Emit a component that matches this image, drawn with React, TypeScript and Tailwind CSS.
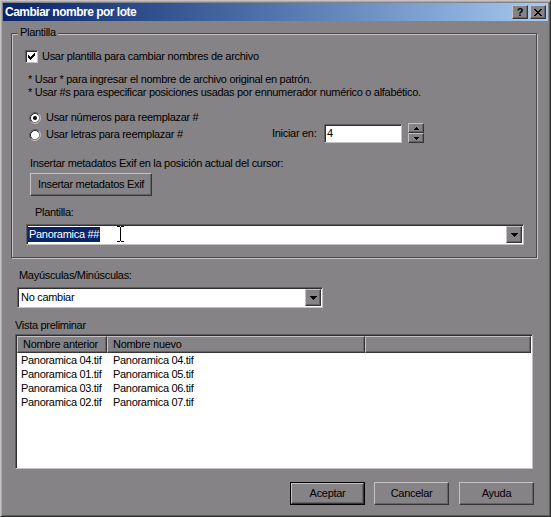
import React from "react";

// bordes clásicos tipo Windows 2000
const RAISED =
  "border border-t-[#c4c2c4] border-l-[#c4c2c4] border-r-[#363636] border-b-[#363636] shadow-[inset_-1px_-1px_0_#656365]";
const SUNKEN =
  "border border-t-[#5e5c5e] border-l-[#5e5c5e] border-r-[#c4c2c4] border-b-[#c4c2c4] shadow-[inset_1px_1px_0_#2f2f2f] p-[1px]";

function DownArrow() {
  return (
    <svg width="7" height="4" viewBox="0 0 7 4" shapeRendering="crispEdges">
      <path d="M0 0h7v1H0z M1 1h5v1H1z M2 2h3v1H2z M3 3h1v1H3z" fill="#000" />
    </svg>
  );
}

function SmallArrow({ up }: { up?: boolean }) {
  return (
    <svg width="5" height="3" viewBox="0 0 5 3" shapeRendering="crispEdges">
      {up ? (
        <path d="M2 0h1v1H2z M1 1h3v1H1z M0 2h5v1H0z" fill="#000" />
      ) : (
        <path d="M0 0h5v1H0z M1 1h3v1H1z M2 2h1v1H2z" fill="#000" />
      )}
    </svg>
  );
}

function Checkbox() {
  return (
    <div className={`${SUNKEN} w-[13px] h-[13px] bg-white flex items-center justify-center`}>
      <svg width="7" height="7" viewBox="0 0 7 7" shapeRendering="crispEdges">
        <path
          d="M6 0h1v1H6z M5 1h2v1H5z M0 2h1v1H0z M4 2h3v1H4z M0 3h2v1H0z M3 3h3v1H3z M0 4h5v1H0z M1 5h3v1H1z M2 6h1v1H2z"
          fill="#000"
        />
      </svg>
    </div>
  );
}

function Radio({ checked }: { checked?: boolean }) {
  return (
    <svg width="12" height="12" viewBox="0 0 12 12">
      <circle cx="6" cy="6" r="4.5" fill="#fff" />
      <path d="M2.11 9.89A5.5 5.5 0 0 1 9.89 2.11" stroke="#5e5c5e" fill="none" />
      <path d="M9.89 2.11A5.5 5.5 0 0 1 2.11 9.89" stroke="#c4c2c4" fill="none" />
      <path d="M2.82 9.18A4.5 4.5 0 0 1 9.18 2.82" stroke="#2f2f2f" fill="none" />
      <path d="M9.18 2.82A4.5 4.5 0 0 1 2.82 9.18" stroke="#858385" fill="none" />
      {checked && <circle cx="6" cy="6" r="2" fill="#000" />}
    </svg>
  );
}

function DropButton() {
  return (
    <div className={`${RAISED} w-[16px] h-full bg-[#858385] flex items-center justify-center shrink-0`}>
      <DownArrow />
    </div>
  );
}

function Button({ label, primary }: { label: string; primary?: boolean }) {
  if (primary) {
    return (
      <div className="w-[75px] h-[23px] border border-black">
        <div className={`${RAISED} h-full flex items-center justify-center`}>{label}</div>
      </div>
    );
  }
  return (
    <div className={`${RAISED} w-[75px] h-[23px] flex items-center justify-center`}>{label}</div>
  );
}

const rows = [
  ["Panoramica 04.tif", "Panoramica 04.tif"],
  ["Panoramica 01.tif", "Panoramica 05.tif"],
  ["Panoramica 03.tif", "Panoramica 06.tif"],
  ["Panoramica 02.tif", "Panoramica 07.tif"],
];

export default function App() {
  return (
    <div className="w-[551px] h-[517px] bg-[#858385] text-black font-['Liberation_Sans',Arial,sans-serif] text-[11px] leading-[13px] tracking-[-0.3px] border border-t-[#c4c2c4] border-l-[#c4c2c4] border-r-[#2e2e2e] border-b-[#2e2e2e] shadow-[inset_1px_1px_0_#a9a7a9,inset_-1px_-1px_0_#5e5c5e] p-[2px] flex flex-col">
      {/* barra de título */}
      <div className="h-[18px] shrink-0 flex items-center bg-linear-to-r from-[#0a246a] to-[#a6caf0] pl-[2px] pr-[2px]">
        <span className="text-white font-bold text-[12px] tracking-[-0.5px]">Cambiar nombre por lote</span>
        <div className="ml-auto flex gap-[2px]">
          <div className={`${RAISED} w-[16px] h-[14px] bg-[#858385] flex items-center justify-center font-bold text-[11px] tracking-normal`}>
            ?
          </div>
          <div className={`${RAISED} w-[16px] h-[14px] bg-[#858385] flex items-center justify-center`}>
            <svg width="8" height="7" viewBox="0 0 8 7" shapeRendering="crispEdges">
              <path
                d="M0 0h2v1H0z M6 0h2v1H6z M1 1h2v1H1z M5 1h2v1H5z M2 2h4v1H2z M3 3h2v1H3z M2 4h4v1H2z M1 5h2v1H1z M5 5h2v1H5z M0 6h2v1H0z M6 6h2v1H6z"
                fill="#000"
              />
            </svg>
          </div>
        </div>
      </div>

      {/* grupo Plantilla */}
      <div className="relative ml-[8px] mt-[12px] w-[526px] h-[225px] shrink-0 border border-[#484648] shadow-[inset_1px_1px_0_#c4c2c4,1px_1px_0_#c4c2c4] flex flex-col">
        <span className="absolute -top-[8px] left-[6px] px-[2px] bg-[#858385]">Plantilla</span>

        <div className="mt-[16px] ml-[13px] h-[13px] flex items-center gap-[4px]">
          <Checkbox />
          <span>Usar plantilla para cambiar nombres de archivo</span>
        </div>

        <div className="mt-[10px] ml-[16px]">
          <div>* Usar * para ingresar el nombre de archivo original en patrón.</div>
          <div>* Usar #s para especificar posiciones usadas por ennumerador numérico o alfabético.</div>
        </div>

        <div className="mt-[10px] flex items-end">
          <div className="ml-[17px] w-[243px] flex flex-col">
            <div className="h-[17px] flex items-center gap-[5px]">
              <Radio checked />
              <span>Usar números para reemplazar #</span>
            </div>
            <div className="h-[17px] flex items-center gap-[5px]">
              <Radio />
              <span>Usar letras para reemplazar #</span>
            </div>
          </div>
          <div className="w-[52px] h-[19px] flex items-center">Iniciar en:</div>
          <div className={`${SUNKEN} w-[78px] h-[19px] bg-white flex items-center pl-[2px]`}>4</div>
          <div className="ml-[6px] h-[20px] flex flex-col">
            <div className={`${RAISED} w-[16px] h-[10px] flex items-center justify-center`}>
              <SmallArrow up />
            </div>
            <div className={`${RAISED} w-[16px] h-[10px] flex items-center justify-center`}>
              <SmallArrow />
            </div>
          </div>
        </div>

        <div className="mt-[14px] ml-[18px]">Insertar metadatos Exif en la posición actual del cursor:</div>
        <div className={`${RAISED} mt-[3px] ml-[18px] w-[122px] h-[23px] flex items-center justify-center`}>
          Insertar metadatos Exif
        </div>

        <div className="mt-[10px] ml-[23px]">Plantilla:</div>
        <div className={`${SUNKEN} relative mt-[5px] ml-[14px] w-[498px] h-[21px] bg-white flex`}>
          <div className="flex-1 flex items-center">
            <span className="bg-[#0a246a] text-white leading-[15px] pl-[1px] pr-[1px]">Panoramica ##</span>
          </div>
          <svg className="absolute left-[90px] top-[1px]" width="7" height="16" viewBox="0 0 7 16" shapeRendering="crispEdges">
            <path d="M0 0h3v1H0z M4 0h3v1H4z M3 1h1v14H3z M0 15h3v1H0z M4 15h3v1H4z" fill="#000" />
          </svg>
          <DropButton />
        </div>
      </div>

      <div className="mt-[11px] ml-[16px]">Mayúsculas/Minúsculas:</div>
      <div className={`${SUNKEN} mt-[5px] ml-[14px] w-[306px] h-[21px] shrink-0 bg-white flex`}>
        <div className="flex-1 flex items-center pl-[2px]">No cambiar</div>
        <DropButton />
      </div>

      <div className="mt-[11px] ml-[12px]">Vista preliminar</div>
      <div className={`${SUNKEN} mt-[2px] ml-[12px] w-[518px] h-[135px] shrink-0 bg-white flex flex-col`}>
        <div className="h-[17px] flex shrink-0 bg-[#858385]">
          <div className={`${RAISED} w-[90px] flex items-center pl-[5px]`}>Nombre anterior</div>
          <div className={`${RAISED} w-[258px] flex items-center pl-[5px]`}>Nombre nuevo</div>
          <div className={`${RAISED} flex-1`} />
        </div>
        {rows.map((r, i) => (
          <div key={i} className="h-[14px] flex items-center">
            <div className="w-[90px] pl-[4px]">{r[0]}</div>
            <div className="pl-[6px]">{r[1]}</div>
          </div>
        ))}
      </div>

      <div className="mt-[13px] flex justify-end pr-[14px]">
        <Button label="Aceptar" primary />
        <div className="ml-[9px]">
          <Button label="Cancelar" />
        </div>
        <div className="ml-[10px]">
          <Button label="Ayuda" />
        </div>
      </div>
    </div>
  );
}
